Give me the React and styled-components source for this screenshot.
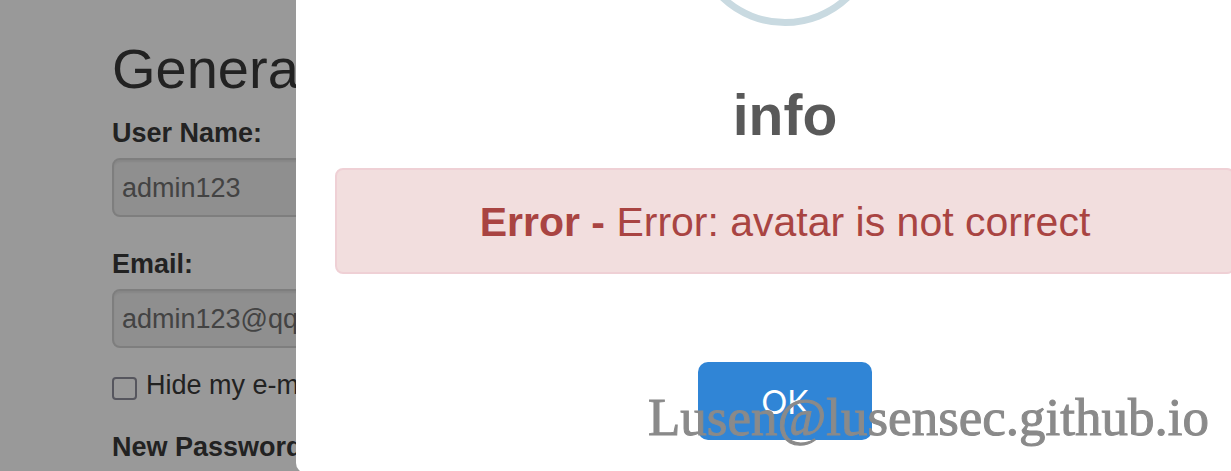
import React from "react";
import styled, { createGlobalStyle } from "styled-components";

const GlobalStyle = createGlobalStyle`
  * { box-sizing: border-box; }
  html, body { height: 100%; }
  body {
    margin: 0;
    overflow: hidden;
    background: #fff;
    color: #393939;
    font-family: "Liberation Sans", Arial, sans-serif;
    font-size: 27px;
    line-height: 32px;
  }
`;

const SettingsForm = styled.form`
  display: flex;
  flex-direction: column;
  padding: 35px 112px 0;
`;

const Heading = styled.h1`
  margin: 0 0 14px;
  font-size: 56px;
  font-weight: 400;
  line-height: 68px;
`;

const Field = styled.div`
  display: flex;
  flex-direction: column;
  gap: 9px;
  margin-bottom: ${({ $gap }) => $gap}px;
`;

const Label = styled.label`
  font-weight: 700;
`;

const TextInput = styled.input`
  width: 100%;
  height: 59px;
  padding: 2px 8px 0;
  border: 2px solid #d2d2d2;
  border-radius: 8px;
  background: #eee;
  box-shadow: inset 0 2px 2px rgba(0, 0, 0, 0.06);
  color: #707070;
  font: inherit;
`;

const CheckRow = styled.label`
  display: flex;
  align-items: center;
  gap: 9px;
  margin-bottom: 30px;
`;

const Checkbox = styled.input`
  appearance: none;
  width: 25px;
  height: 23px;
  margin: 6px 0 0;
  border: 2px solid #8f8f9d;
  border-radius: 4px;
`;

const Backdrop = styled.div`
  position: fixed;
  inset: 0;
  overflow: hidden;
  padding-left: 296px;
  background: rgba(0, 0, 0, 0.4);
`;

const Dialog = styled.section`
  display: flex;
  flex-direction: column;
  align-items: center;
  margin-right: -43px;
  padding: 0 39px 33px;
  border-radius: 0 0 10px 10px;
  background: #fff;
`;

const StatusRing = styled.div`
  width: 188px;
  height: 188px;
  margin-top: -162px;
  border: 7px solid #c9dae1;
  border-radius: 50%;
`;

const Title = styled.h2`
  margin: 55px 0 19px;
  color: #595959;
  font-size: 57px;
  line-height: 68px;
`;

const Alert = styled.div`
  width: 100%;
  padding: 28px 38px 26px;
  border: 2px solid #efd0d5;
  border-radius: 8px;
  background: #f2dede;
  color: #a94442;
  font-size: 41px;
  line-height: 48px;
  text-align: center;
`;

const ConfirmButton = styled.button`
  width: 174px;
  height: 78px;
  margin-top: 88px;
  padding: 2px 0 0;
  border: 0;
  border-radius: 10px;
  background: #3085d6;
  color: #fff;
  font-family: Lato, sans-serif;
  font-size: 32px;
  line-height: 40px;
`;

const Watermark = styled.div`
  position: fixed;
  right: 22px;
  bottom: 24px;
  color: #8a8a8a;
  font-family: "Liberation Serif", "Times New Roman", serif;
  font-size: 53px;
  line-height: 60px;
  -webkit-text-stroke: 1px #8a8a8a;
  pointer-events: none;
`;

export default function App() {
  return (
    <>
      <GlobalStyle />
      <SettingsForm>
        <Heading>General</Heading>
        <Field $gap={31}>
          <Label htmlFor="username">User Name:</Label>
          <TextInput id="username" defaultValue="admin123" disabled />
        </Field>
        <Field $gap={21}>
          <Label htmlFor="email">Email:</Label>
          <TextInput id="email" defaultValue="admin123@qq" disabled />
        </Field>
        <CheckRow>
          <Checkbox type="checkbox" />
          Hide my e-mail
        </CheckRow>
        <Label as="div">New Password:</Label>
      </SettingsForm>
      <Backdrop>
        <Dialog role="dialog" aria-labelledby="dialog-title">
          <StatusRing />
          <Title id="dialog-title">info</Title>
          <Alert role="alert">
            <strong>Error -</strong> Error: avatar is not correct
          </Alert>
          <ConfirmButton type="button">OK</ConfirmButton>
        </Dialog>
      </Backdrop>
      <Watermark>Lusen@lusensec.github.io</Watermark>
    </>
  );
}
